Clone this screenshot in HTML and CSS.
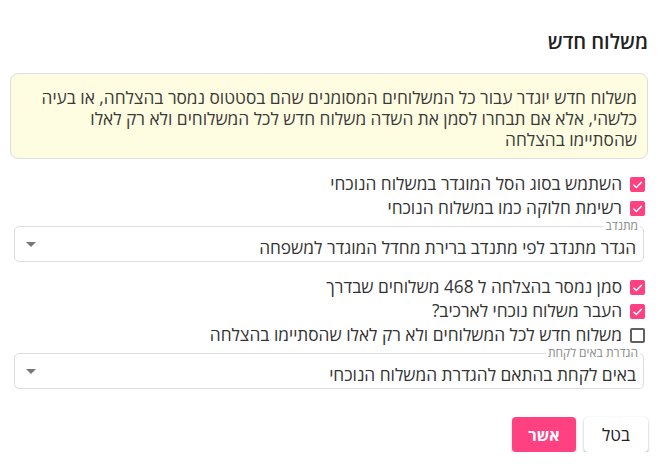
FILE: index.html
```html
<!DOCTYPE html>
<html lang="he" dir="rtl">
<head>
<meta charset="utf-8">
<link rel="stylesheet" href="styles.css">
</head>
<body>
<div class="dialog">
  <h2 class="title">משלוח חדש</h2>
  <div class="alert">משלוח חדש יוגדר עבור כל המשלוחים המסומנים שהם בסטטוס נמסר בהצלחה, או בעיה כלשהי, אלא אם תבחרו לסמן את השדה משלוח חדש לכל המשלוחים ולא רק לאלו שהסתיימו בהצלחה</div>

  <div class="checks first">
    <label class="check"><span class="box on"><svg viewBox="0 0 14 14"><path d="M3.2 7.2 L5.9 9.8 L10.9 4.6" /></svg></span><span class="lbl">השתמש בסוג הסל המוגדר במשלוח הנוכחי</span></label>
    <label class="check"><span class="box on"><svg viewBox="0 0 14 14"><path d="M3.2 7.2 L5.9 9.8 L10.9 4.6" /></svg></span><span class="lbl">רשימת חלוקה כמו במשלוח הנוכחי</span></label>
  </div>

  <div class="select">
    <span class="legend">מתנדב</span>
    <span class="value">הגדר מתנדב לפי מתנדב ברירת מחדל המוגדר למשפחה</span>
    <span class="arrow"></span>
  </div>

  <div class="checks">
    <label class="check"><span class="box on"><svg viewBox="0 0 14 14"><path d="M3.2 7.2 L5.9 9.8 L10.9 4.6" /></svg></span><span class="lbl">סמן נמסר בהצלחה ל 468 משלוחים שבדרך</span></label>
    <label class="check"><span class="box on"><svg viewBox="0 0 14 14"><path d="M3.2 7.2 L5.9 9.8 L10.9 4.6" /></svg></span><span class="lbl">העבר משלוח נוכחי לארכיב?</span></label>
    <label class="check"><span class="box off"></span><span class="lbl">משלוח חדש לכל המשלוחים ולא רק לאלו שהסתיימו בהצלחה</span></label>
  </div>

  <div class="select">
    <span class="legend">הגדרת באים לקחת</span>
    <span class="value">באים לקחת בהתאם להגדרת המשלוח הנוכחי</span>
    <span class="arrow"></span>
  </div>

  <div class="actions">
    <button class="btn cancel">בטל</button>
    <button class="btn ok">אשר</button>
  </div>
</div>
</body>
</html>
```
FILE: styles.css
```css
html, body {
  margin: 0;
  padding: 0;
  background: #fff;
}
body {
  font-family: "Open Sans", "DejaVu Sans", sans-serif;
  color: #333;
  direction: rtl;
}
.dialog {
  padding: 30px 14px 0 14px;
  display: flex;
  flex-direction: column;
}
.title {
  margin: 0 0 19px 0;
  font-size: 20px;
  line-height: 24px;
  font-weight: 600;
  color: #222;
}
.alert {
  margin: 0 0 0 -4px;
  background: #fffde1;
  border: 1px solid #ddd;
  border-radius: 8px;
  padding: 13px 10px 8px 14px;
  font-size: 17.3px;
  line-height: 21px;
  color: #3a3a3a;
}
.checks {
  display: flex;
  flex-direction: column;
  margin-top: 13px;
}
.check {
  display: flex;
  align-items: center;
  gap: 8px;
  height: 24px;
  font-size: 17.3px;
  color: #333;
  padding-right: 3px;
}
.lbl {
  line-height: 20px;
}
.box {
  width: 15px;
  height: 15px;
  box-sizing: border-box;
  border-radius: 2px;
  flex: none;
  display: flex;
}
.box.on {
  background: #ff4081;
}
.box.on svg {
  width: 15px;
  height: 15px;
}
.box.on path {
  fill: none;
  stroke: #fff;
  stroke-width: 1.4;
}
.box.off {
  border: 2px solid #606060;
}
.select {
  position: relative;
  margin: 5px 4px 0 0;
  height: 36px;
  box-sizing: border-box;
  border: 1px solid #ddd;
  border-radius: 5px;
  display: flex;
  align-items: center;
  padding: 6px 7px 0 10px;
}
.legend {
  position: absolute;
  top: -7px;
  right: 3px;
  background: #fff;
  padding: 0 2px;
  font-size: 12px;
  line-height: 12px;
  color: #888;
}
.value {
  flex: 1;
  font-size: 17.3px;
  color: #333;
}
.arrow {
  width: 0;
  height: 0;
  border-left: 5px solid transparent;
  border-right: 5px solid transparent;
  border-top: 5px solid #777;
  margin-left: 1px;
  margin-bottom: 6px;
}
.checks + .select {
  margin-top: 6px;
}
.actions {
  display: flex;
  gap: 8px;
  margin-top: 28px;
}
.btn {
  width: 64px;
  height: 35px;
  border: none;
  border-radius: 4px;
  font-family: "Open Sans", "DejaVu Sans", sans-serif;
  font-size: 17px;
  cursor: pointer;
  padding: 0;
}
.cancel {
  background: #fff;
  color: #222;
  box-shadow: 0 2px 3px rgba(0,0,0,0.25), 0 0 1px rgba(0,0,0,0.15);
}
.ok {
  background: #ff4081;
  color: #fff;
  font-weight: 700;
  font-size: 16px;
  box-shadow: 0 2px 3px rgba(0,0,0,0.2);
}
```
